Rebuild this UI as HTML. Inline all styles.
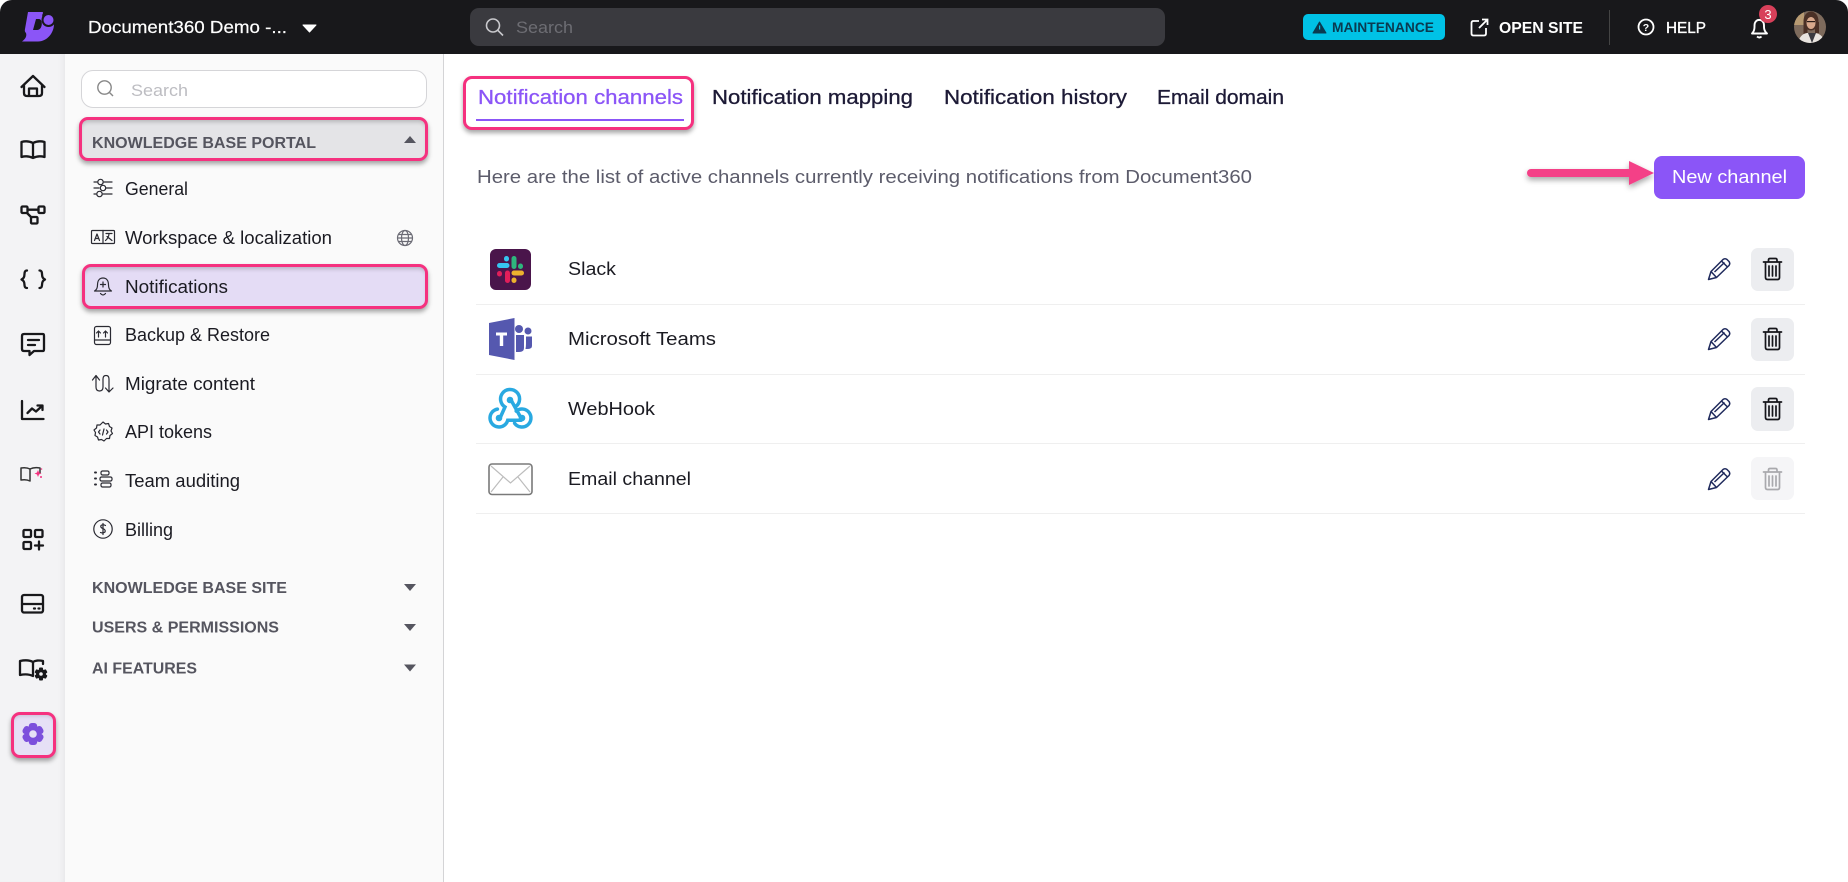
<!DOCTYPE html>
<html lang="en"><head><meta charset="utf-8"><title>Notification channels</title>
<style>
html,body{margin:0;padding:0;background:#fff;width:1848px;height:882px;overflow:hidden}
.a{position:absolute;box-sizing:border-box}
svg{position:absolute;left:0;top:0}
text{font-family:"Liberation Sans",sans-serif}
</style></head><body>
<div class="a" style="left:0;top:54px;width:65px;height:828px;background:#f3f3f5;box-shadow:inset -6px 0 6px -4px #e6e6e9"></div>
<div class="a" style="left:65px;top:54px;width:379px;height:828px;background:#fafafa;border-right:1.5px solid #d4d4d6"></div>
<div class="a" style="left:0;top:0;width:1848px;height:54px;background:#18181b;border-radius:12px 12px 0 0"></div>
<div class="a" style="left:470px;top:8px;width:695px;height:38px;background:#3a3a3f;border-radius:9px"></div>
<div class="a" style="left:81px;top:70px;width:346px;height:38px;background:#fff;border:1.3px solid #d5d5d8;border-radius:12px"></div>
<div class="a" style="left:79px;top:117px;width:349px;height:44px;background:#e4e4e7;border:3px solid #f5317f;border-radius:9px;box-shadow:0 3px 5px rgba(0,0,0,.35),inset 0 4px 4px -2px rgba(0,0,0,.2)"></div>
<div class="a" style="left:82px;top:264px;width:346px;height:45px;background:#e4dcf5;border:3px solid #f5317f;border-radius:9px;box-shadow:0 3px 5px rgba(0,0,0,.35),inset 0 4px 4px -2px rgba(0,0,0,.2)"></div>
<div class="a" style="left:11px;top:712px;width:45px;height:46px;background:#e6e0f6;border:3px solid #f5317f;border-radius:9px;box-shadow:0 3px 5px rgba(0,0,0,.35),inset 0 3px 4px -2px rgba(0,0,0,.15)"></div>
<div class="a" style="left:463px;top:76px;width:231px;height:54px;background:#fff;border:3px solid #f5317f;border-radius:9px;box-shadow:0 3px 5px rgba(0,0,0,.35)"></div>
<div class="a" style="left:476px;top:119px;width:208px;height:2px;background:#8b55f7"></div>
<div class="a" style="left:1654px;top:156px;width:151px;height:43px;background:#8b55f7;border-radius:8px"></div>
<div class="a" style="left:1303px;top:14px;width:142px;height:26px;background:#00c2e6;border-radius:5px"></div>
<div class="a" style="left:1609px;top:10px;width:1px;height:35px;background:#444"></div>
<div class="a" style="left:476px;top:304px;width:1329px;height:1px;background:#efefef"></div>
<div class="a" style="left:476px;top:374px;width:1329px;height:1px;background:#efefef"></div>
<div class="a" style="left:476px;top:443px;width:1329px;height:1px;background:#efefef"></div>
<div class="a" style="left:476px;top:513px;width:1329px;height:1px;background:#efefef"></div>
<div class="a" style="left:1751px;top:248px;width:43px;height:43px;background:#ecedf0;border-radius:7px"></div>
<div class="a" style="left:1751px;top:318px;width:43px;height:43px;background:#ecedf0;border-radius:7px"></div>
<div class="a" style="left:1751px;top:387px;width:43px;height:44px;background:#ecedf0;border-radius:7px"></div>
<div class="a" style="left:1751px;top:457px;width:43px;height:43px;background:#f5f5f7;border-radius:7px"></div>

<svg width="1848" height="882" viewBox="0 0 1848 882" xmlns="http://www.w3.org/2000/svg">
<defs>
<filter id="sh" x="-20%" y="-80%" width="140%" height="300%"><feDropShadow dx="0" dy="3" stdDeviation="3" flood-color="#000" flood-opacity=".35"/></filter>
<g id="pen" fill="none" stroke="#1f2a5c" stroke-width="1.5" stroke-linejoin="round"><path d="M1708.500 279.500L1711 271.500L1723 259.500Q1725 258 1727 259.500L1729 261.500Q1730.500 263.500 1729 265.500L1716.500 277.500Z"/><path d="M1711 271.500L1716.500 277.500M1714.500 272L1724.500 262.500M1721.500 261L1727.500 267"/></g>
<g id="tr" fill="none" stroke-width="1.700" stroke-linecap="round"><path d="M1763.500 262H1781.500M1768.500 261.500V260Q1768.500 258.500 1770 258.500H1775.500Q1777 258.500 1777 260V261.500M1765.500 263V277.500Q1765.500 279.500 1767.500 279.500H1777.500Q1779.500 279.500 1779.500 277.500V263M1769 266V276M1772.500 266V276M1776 266V276"/></g>
</defs>

<!-- logo -->
<path d="M28 12H42C43 12 43.500 13 42.500 14C41.500 17 43 21 46 23.500C48.500 25 52 25 54 24C54 33 47 41.500 38 41.500H22C25.500 39 27 36 26 33C25 32 24.500 31 25 29Z" fill="#8b55f7"/>
<path d="M36 19H39C43 19 43 30 37 30H33Z" fill="#18181b"/>
<circle cx="48.500" cy="20" r="7" fill="#18181b"/>
<circle cx="48.500" cy="20" r="5" fill="#8b55f7"/>

<!-- top bar -->
<text x="88" y="33" font-size="17.500" fill="#fff" stroke="#fff" stroke-width=".2" textLength="199" lengthAdjust="spacingAndGlyphs">Document360 Demo -...</text>
<path d="M303 25H316L309.500 32Z" fill="#fff" stroke="#fff" stroke-linejoin="round"/>
<circle cx="493" cy="25.500" r="6.500" fill="none" stroke="#c9c9cd" stroke-width="1.600"/><path d="M497.800 30.300L503 35.500" stroke="#c9c9cd" stroke-width="1.600"/>
<text x="516" y="33" font-size="17" fill="#6d6d73" textLength="57" lengthAdjust="spacingAndGlyphs">Search</text>

<path d="M1319.500 22L1326 33H1313Z" fill="#0a3a50" stroke="#0a3a50" stroke-linejoin="round"/>
<rect x="1319" y="25.500" width="1.200" height="4" fill="#00c2e6"/>
<text x="1332" y="32" font-size="13.500" font-weight="700" fill="#0a3a50" textLength="102" lengthAdjust="spacingAndGlyphs">MAINTENANCE</text>
<path d="M1479 21H1473.500Q1471.500 21 1471.500 23V33.500Q1471.500 35.500 1473.500 35.500H1484Q1486 35.500 1486 33.500V28M1479 28L1487.500 19.500M1482 19.500H1487.500V25" fill="none" stroke="#fff" stroke-width="1.800"/>
<text x="1499" y="33" font-size="15.500" font-weight="700" fill="#fff" textLength="84" lengthAdjust="spacingAndGlyphs">OPEN SITE</text>
<circle cx="1646" cy="27" r="7.500" fill="none" stroke="#fff" stroke-width="1.800"/>
<text x="1646" y="31" font-size="10.500" font-weight="700" fill="#fff" text-anchor="middle">?</text>
<text x="1666" y="33" font-size="15.500" fill="#fff" stroke="#fff" stroke-width=".35" textLength="40" lengthAdjust="spacingAndGlyphs">HELP</text>
<path d="M1752 33.500Q1754.500 31 1754.500 27V25.500C1754.500 18 1764 18 1764 25.500V27Q1764 31 1767 33.500Z" fill="none" stroke="#fff" stroke-width="1.900" stroke-linejoin="round"/>
<path d="M1757 36.500Q1759.500 38.500 1761.500 36.500" fill="none" stroke="#fff" stroke-width="1.900"/>
<circle cx="1768" cy="14" r="9" fill="#d8405a"/>
<text x="1768" y="19" font-size="13" fill="#fff" text-anchor="middle">3</text>
<clipPath id="av"><circle cx="1810" cy="27" r="16"/></clipPath>
<g clip-path="url(#av)"><rect x="1794" y="11" width="32" height="32" fill="#7d6a5c"/><rect x="1794" y="11" width="10" height="14" fill="#b79a72"/>
<ellipse cx="1811" cy="21" rx="7.500" ry="9.500" fill="#4a3026"/><rect x="1803.500" y="22" width="4" height="12" fill="#4a3026"/><rect x="1815" y="22" width="4" height="11" fill="#4a3026"/>
<ellipse cx="1811" cy="23" rx="4.500" ry="6" fill="#d8a88c"/><rect x="1807" y="21" width="8" height="1.200" fill="#2a1c18"/>
<path d="M1798 43Q1800 34 1807 33L1815 33Q1823 34 1825 43Z" fill="#e8e4e0"/><path d="M1808 33L1812 43L1816 33Z" fill="#3a3a40"/></g>

<!-- rail icons -->
<g fill="none" stroke="#18181b" stroke-width="2.300" stroke-linejoin="round" stroke-linecap="round">
<path d="M21.500 87L33 76L44.500 87M24 84.500V93Q24 96 27 96H39Q42 96 42 93V84.500M29 96V88.500H37V96"/>
<path d="M33 143C29 141 25 141 21.500 142V157C25 156 29 156 33 158C37 156 41 156 44.500 157V142C41 141 37 141 33 143ZM33 143V158"/>
<rect x="21.500" y="206.500" width="6" height="6.500" rx="1"/><rect x="38.500" y="206.500" width="6" height="6.500" rx="1"/><rect x="31" y="217" width="6.500" height="6.500" rx="1"/><path d="M27.500 209.700H38.500M27 213L31.500 217.500"/>
<path d="M27 270.500C23.500 270.500 25 275 24 277C23.500 278.500 22.500 279 21.500 279.500C22.500 280 23.500 280.500 24 282C25 284 23.500 288 27 288M39.500 270.500C43 270.500 41.500 275 42.500 277C43 278.500 44 279 45 279.500C44 280 43 280.500 42.500 282C41.500 284 43 288 39.500 288"/>
<path d="M24 334H43Q44 334 44 336V349Q44 351 43 351H34L29.500 355V351H24Q22 351 22 349V336Q22 334 24 334ZM28 340H39M28 345H35"/>
<path d="M22 401V419H43.500M27.500 413L32 408.500L36 411.500L42 406M37.500 405.500H42.500V410"/>
<path d="M21 468V480C24 479.500 27 479.500 30 481M30 481V469C27 467.500 24 467.500 21 468M30 469C33 467.500 37 467.500 40 468V473" stroke-width="1.500" stroke="#333"/>
<rect x="23.500" y="530" width="7.500" height="7" rx="1"/><rect x="35" y="530" width="7.500" height="7" rx="1"/><rect x="23.500" y="542" width="7.500" height="7" rx="1"/><path d="M39 541.500V549.500M35 545.500H43"/>
<rect x="22" y="595" width="21" height="17.500" rx="2"/><path d="M22 604H43M34 608.500H35M38.500 608.500H39.500"/>
<path d="M33 662C29.500 660 24.500 660 20 661V675C24.500 674 29 674 33 676M33 662V675.500M33 662C35 660.500 39 660 43 661V664"/>
</g>
<path d="M38 470l1 2.500 2.500 1-2.500 1-1 2.500-1-2.500-2.500-1 2.500-1z" fill="#f5317f"/><circle cx="41" cy="477" r="1" fill="#f5317f"/><circle cx="41.500" cy="469" r=".8" fill="#f5317f"/>
<!-- small gear -->
<g fill="#18181b"><circle cx="41" cy="674" r="5"/><rect x="39" y="667.500" width="4" height="13" rx="1"/><rect x="39" y="667.500" width="4" height="13" rx="1" transform="rotate(60 41 674)"/><rect x="39" y="667.500" width="4" height="13" rx="1" transform="rotate(120 41 674)"/></g>
<circle cx="41" cy="674" r="1.800" fill="#f3f3f5"/>
<!-- settings gear -->
<g fill="#7c4fdc"><circle cx="33" cy="734" r="8.500"/><rect x="28.800" y="723" width="8.400" height="22" rx="3"/><rect x="28.800" y="723" width="8.400" height="22" rx="3" transform="rotate(60 33 734)"/><rect x="28.800" y="723" width="8.400" height="22" rx="3" transform="rotate(120 33 734)"/></g>
<circle cx="33" cy="734" r="3.800" fill="#e6e0f6"/>

<!-- sidebar -->
<circle cx="104.500" cy="87.500" r="6.700" fill="none" stroke="#888" stroke-width="1.400"/><path d="M109.500 92.500L113 96" stroke="#888" stroke-width="1.400"/>
<text x="131" y="96" font-size="17" fill="#bdbdc2" textLength="57" lengthAdjust="spacingAndGlyphs">Search</text>

<g font-size="16" font-weight="700" fill="#55555f">
<text x="92" y="148" textLength="224" lengthAdjust="spacingAndGlyphs">KNOWLEDGE BASE PORTAL</text>
<text x="92" y="593" textLength="195" lengthAdjust="spacingAndGlyphs">KNOWLEDGE BASE SITE</text>
<text x="92" y="632.500" textLength="187" lengthAdjust="spacingAndGlyphs">USERS &amp; PERMISSIONS</text>
<text x="92" y="673.500" textLength="105" lengthAdjust="spacingAndGlyphs">AI FEATURES</text>
</g>
<g fill="#55555f"><path d="M404 143H416L410 136Z"/><path d="M404 584H416L410 591Z"/><path d="M404 624H416L410 631Z"/><path d="M404 664.500H416L410 671.500Z"/></g>

<g font-size="18" fill="#1b1b22">
<text x="125" y="195" textLength="63" lengthAdjust="spacingAndGlyphs">General</text>
<text x="125" y="244" textLength="207" lengthAdjust="spacingAndGlyphs">Workspace &amp; localization</text>
<text x="125" y="293" textLength="103" lengthAdjust="spacingAndGlyphs">Notifications</text>
<text x="125" y="341" textLength="145" lengthAdjust="spacingAndGlyphs">Backup &amp; Restore</text>
<text x="125" y="390" textLength="130" lengthAdjust="spacingAndGlyphs">Migrate content</text>
<text x="125" y="438" textLength="87" lengthAdjust="spacingAndGlyphs">API tokens</text>
<text x="125" y="487" textLength="115" lengthAdjust="spacingAndGlyphs">Team auditing</text>
<text x="125" y="536" textLength="48" lengthAdjust="spacingAndGlyphs">Billing</text>
</g>

<g fill="none" stroke="#2a2a32" stroke-width="1.200" stroke-linecap="round" stroke-linejoin="round">
<path d="M94 182H97M104 182H112M94 188H99M106 188H112M94 194H96M103 194H112"/><circle cx="100.500" cy="182" r="2.700"/><circle cx="103" cy="188" r="2.700"/><circle cx="99.500" cy="194" r="2.700"/>
<rect x="91.500" y="230.500" width="23" height="13" rx="1"/><path d="M103 230.500V243.500M94.500 240.500L97 234L99.500 240.500M95.500 238.500H98.500M106 233.500H112M109 233.500C109 236 107.500 239 105.500 240.500M107 236.500L112 240.500"/>
<path d="M94.500 291Q97.500 289.500 97.500 285C97.500 280 100 278 103 278C106 278 108.500 280 108.500 285Q108.500 289.500 111.500 291ZM100.500 293.500Q103 296.500 105.500 293.500M103 282V287M100.500 284.500H105.500"/>
<rect x="94.500" y="326.500" width="16" height="18" rx="2"/><path d="M94.500 340H110.500M98.500 337V331M96.500 333L98.500 331L100.500 333M105.500 337V331M103.500 333L105.500 331L107.500 333"/>
<path d="M96 377L96 387Q96 391 99.500 391Q103 391 103 387V379Q103 375.500 106 375.500Q109 375.500 109 379V391M92.500 380L96 375.500L99.500 380M105.500 388L109 392L113 388"/>
<path d="M103 422L105.500 424L108.500 423.500L109.500 426.500L112 428L111 431L112.500 433.500L110 435.500L109.500 438.500L106.500 438.500L104 441L101.500 439.500L98.500 440L97.500 437L95 435.500L95.500 432.500L94 430L96.500 428L97 425L100 425Z"/><path d="M100 430L98.500 432L100 434M106.500 430L108 432L106.500 434M102.500 435L104 429"/>
<path d="M95 472.500H96M95 478.500H96M95 484.500H96" stroke-width="2"/><rect x="101" y="471" width="8" height="4" rx="1.500"/><rect x="100" y="477" width="12" height="4" rx="1.500"/><rect x="101" y="483" width="10" height="4" rx="1.500"/>
<circle cx="103" cy="529" r="9.200"/><path d="M105.500 525.500Q103 524 101 525.500Q100 527.500 103 528.500Q106 530 105 532Q103 533.500 100.500 532.500M103 523.500V534.500"/>
</g>
<g fill="none" stroke="#6b6b75" stroke-width="1.200"><circle cx="405" cy="238" r="7.500"/><ellipse cx="405" cy="238" rx="3.500" ry="7.500"/><path d="M397.500 238H412.500M398.500 234.500H411.500M398.500 241.500H411.500"/></g>

<!-- tabs -->
<g font-size="20.500" stroke-width=".3">
<text x="478" y="104" fill="#8b55f7" stroke="#8b55f7" textLength="205" lengthAdjust="spacingAndGlyphs">Notification channels</text>
<text x="712" y="104" fill="#1d1a36" stroke="#1d1a36" textLength="201" lengthAdjust="spacingAndGlyphs">Notification mapping</text>
<text x="944" y="104" fill="#1d1a36" stroke="#1d1a36" textLength="183" lengthAdjust="spacingAndGlyphs">Notification history</text>
<text x="1157" y="104" fill="#1d1a36" stroke="#1d1a36" textLength="127" lengthAdjust="spacingAndGlyphs">Email domain</text>
</g>
<text x="477" y="183" font-size="18.500" fill="#5c5c6b" textLength="775" lengthAdjust="spacingAndGlyphs">Here are the list of active channels currently receiving notifications from Document360</text>

<!-- arrow & button -->
<g filter="url(#sh)"><path d="M1531 173H1632" stroke="#f43f87" stroke-width="8" stroke-linecap="round"/><path d="M1629 161L1654 173L1629 185Z" fill="#f43f87"/></g>
<text x="1672" y="183" font-size="18.500" fill="#fff" textLength="115" lengthAdjust="spacingAndGlyphs">New channel</text>

<!-- rows -->
<g font-size="18.500" fill="#1b1b22">
<text x="568" y="275" textLength="48" lengthAdjust="spacingAndGlyphs">Slack</text>
<text x="568" y="345" textLength="148" lengthAdjust="spacingAndGlyphs">Microsoft Teams</text>
<text x="568" y="415" textLength="87" lengthAdjust="spacingAndGlyphs">WebHook</text>
<text x="568" y="485" textLength="123" lengthAdjust="spacingAndGlyphs">Email channel</text>
</g>

<!-- slack -->
<rect x="490" y="249" width="41" height="41" rx="6" fill="#4a154b"/>
<g stroke-linecap="round" stroke-width="5" fill="none">
<path d="M499.500 265.500H507" stroke="#36c5f0"/><path d="M506.500 258.500V259" stroke="#36c5f0"/>
<path d="M514 258.500V266.500" stroke="#2eb67d"/><path d="M520.500 266V266.500" stroke="#2eb67d"/>
<path d="M514 273H521.500" stroke="#ecb22e"/><path d="M514 280V280.500" stroke="#ecb22e"/>
<path d="M507.500 273V280.500" stroke="#e01e5a"/><path d="M499.500 273.500V274" stroke="#e01e5a"/>
</g>
<!-- teams -->
<circle cx="519" cy="329" r="4" fill="#5558af"/><circle cx="528" cy="331" r="3.500" fill="#5558af"/>
<path d="M516 335H524V348Q524 352 519 352H516Z" fill="#5558af"/><path d="M526 336.500H532V346Q532 349 527 349H525.500Q526 346 526 344Z" fill="#5558af"/>
<path d="M489 323L514.500 318V360L489 355Z" fill="#5558af"/>
<path d="M496 332.500H507V335.500H503.200V346H499.800V335.500H496Z" fill="#fff"/>
<!-- webhook -->
<g fill="none" stroke="#29a9e1" stroke-width="3.500" stroke-linecap="round">
<path d="M500.500 417L505 407A9.500 9.500 0 1 1 516.100 406.300"/>
<path d="M511 400L520.500 417"/>
<path d="M497.400 409.100A9 9 0 1 0 507.700 420.300H521"/>
<path d="M516.200 411.100A9 9 0 1 1 514.600 423.200"/>
</g>
<g fill="#29a9e1"><circle cx="510" cy="400" r="3.300"/><circle cx="499" cy="418" r="3.300"/><circle cx="522" cy="418" r="3.300"/></g>
<!-- email -->
<rect x="489" y="464" width="43" height="30.500" rx="3" fill="none" stroke="#7a7a7a" stroke-width="1.600"/>
<path d="M491 466L510.500 483L530 466M491 492L503 477M530 492L518 477" fill="none" stroke="#bdbdbd" stroke-width="1.200"/>

<!-- actions -->
<use href="#pen"/><use href="#pen" y="70"/><use href="#pen" y="140"/><use href="#pen" y="210"/>
<use href="#tr" stroke="#15151a"/><use href="#tr" y="70" stroke="#15151a"/><use href="#tr" y="140" stroke="#15151a"/><use href="#tr" y="210" stroke="#a9a9ad"/>
</svg>
</body></html>
